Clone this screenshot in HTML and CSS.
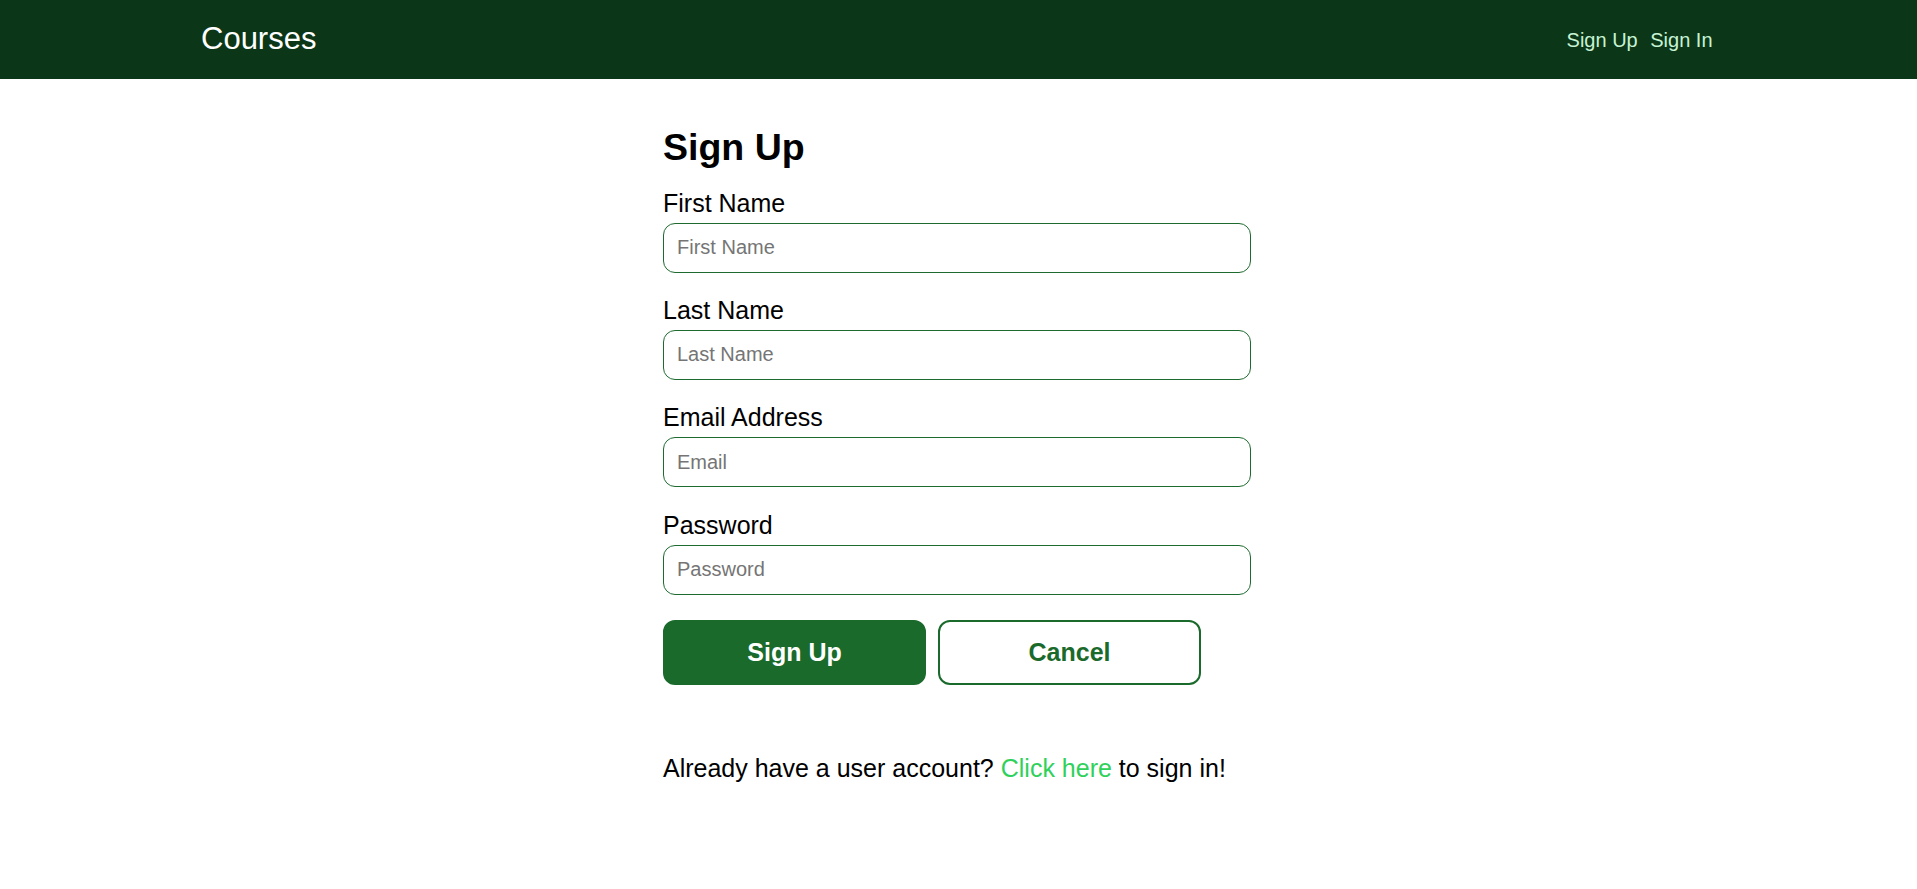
FILE: index.html
```html
<!DOCTYPE html>
<html lang="en">
<head>
<meta charset="utf-8">
<title>Courses - Sign Up</title>
<link rel="stylesheet" href="styles.css">
</head>
<body>
<header class="header">
  <div class="header-inner">
    <a class="brand" href="#">Courses</a>
    <nav class="nav">
      <a class="nav-link" href="#">Sign Up</a>
      <a class="nav-link" href="#">Sign In</a>
    </nav>
  </div>
</header>
<main class="main">
  <div class="form-wrap">
    <h1 class="title">Sign Up</h1>
    <form class="form">
      <div class="field">
        <label class="label" for="firstName">First Name</label>
        <input class="input" id="firstName" type="text" placeholder="First Name">
      </div>
      <div class="field">
        <label class="label" for="lastName">Last Name</label>
        <input class="input" id="lastName" type="text" placeholder="Last Name">
      </div>
      <div class="field">
        <label class="label" for="email">Email Address</label>
        <input class="input" id="email" type="email" placeholder="Email">
      </div>
      <div class="field">
        <label class="label" for="password">Password</label>
        <input class="input" id="password" type="password" placeholder="Password">
      </div>
      <div class="actions">
        <button class="btn btn-primary" type="submit">Sign Up</button>
        <button class="btn btn-secondary" type="button">Cancel</button>
      </div>
    </form>
    <p class="signin-note">Already have a user account? <a class="signin-link" href="#">Click here</a> to sign in!</p>
  </div>
</main>
</body>
</html>
```

FILE: styles.css
```css
* {
  box-sizing: border-box;
}

html, body {
  margin: 0;
  padding: 0;
  background: #ffffff;
  font-family: "Liberation Sans", Arial, sans-serif;
  color: #000000;
}

.header {
  background: #0b3617;
  height: 79px;
}

.header-inner {
  height: 100%;
  padding: 0 204.5px 0 201px;
  display: flex;
  align-items: center;
  justify-content: space-between;
}

.brand {
  color: #ffffff;
  text-decoration: none;
  font-size: 31px;
  line-height: 1;
  margin-top: -3px;
}

.nav {
  display: flex;
  gap: 12.5px;
}

.nav-link {
  color: #c6f3d4;
  text-decoration: none;
  font-size: 20px;
  line-height: 1;
}

.main {
  padding-top: 46.5px;
}

.form-wrap {
  width: 591px;
  padding-right: 3px;
  margin: 0 auto;
}

.title {
  margin: 0 0 20px 0;
  font-size: 37.5px;
  font-weight: bold;
  line-height: 43px;
}

.form {
  margin: 0;
  display: flex;
  flex-direction: column;
  gap: 23.4px;
}

.field {
  display: flex;
  flex-direction: column;
  gap: 6px;
}

.label {
  font-size: 25px;
  line-height: 28px;
}

.input {
  height: 50px;
  width: 100%;
  border: 1px solid #1e6b30;
  border-radius: 12px;
  padding: 0 13px;
  font-family: "Liberation Sans", Arial, sans-serif;
  font-size: 20px;
  color: #000;
  background: #fff;
  outline: none;
}

.input::placeholder {
  color: #757575;
}

.actions {
  display: flex;
  gap: 12px;
  margin-top: 1.5px;
}

.btn {
  width: 263px;
  height: 65px;
  border-radius: 12px;
  border: 2px solid #1a6a2c;
  font-family: "Liberation Sans", Arial, sans-serif;
  font-size: 25px;
  font-weight: bold;
  cursor: pointer;
}

.btn-primary {
  background: #1a6a2c;
  color: #ffffff;
}

.btn-secondary {
  background: #ffffff;
  color: #1a6a2c;
}

.signin-note {
  margin: 69px 0 0 0;
  font-size: 25px;
  line-height: 29px;
}

.signin-link {
  color: #2fd15a;
  text-decoration: none;
}
```
